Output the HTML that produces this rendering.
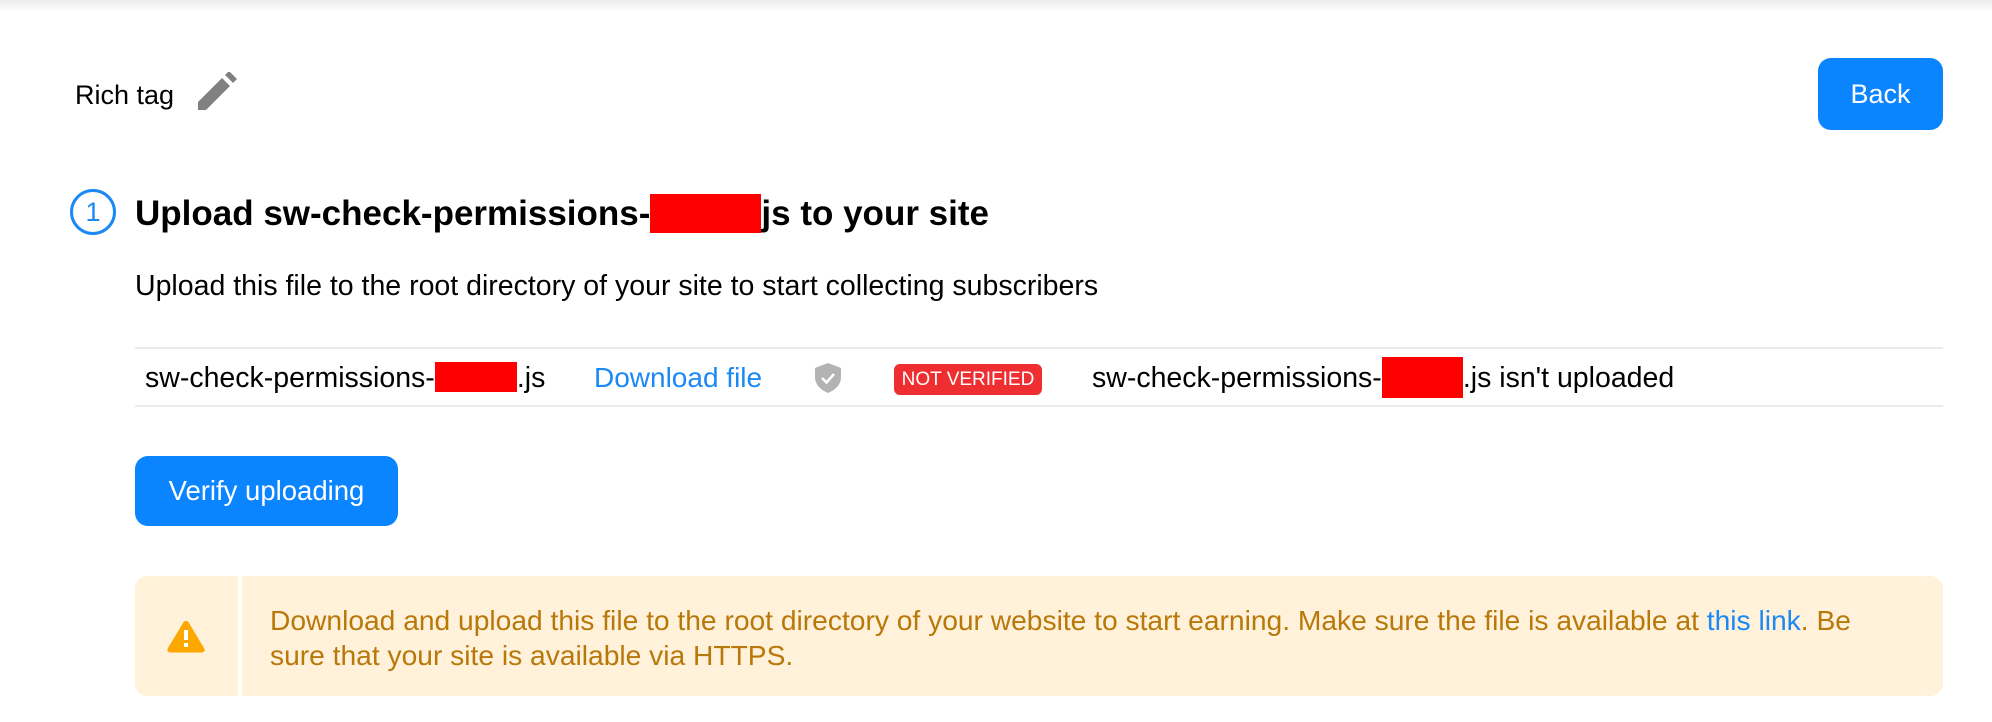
<!DOCTYPE html>
<html><head><meta charset="utf-8"><style>
*{margin:0;padding:0;box-sizing:border-box}
body{width:1992px;height:722px;background:#fff;font-family:"Liberation Sans",Arial,sans-serif;position:relative;overflow:hidden;color:#000}
.a{position:absolute;white-space:nowrap}
.r{display:inline-block;position:relative;height:1px;vertical-align:baseline}
.r i{position:absolute;left:0;right:0;background:#f00}
</style></head><body>
<div class="a" style="left:0;top:0;width:1992px;height:12px;background:linear-gradient(#ececec,#fff)"></div>
<div class="a" style="left:75px;top:80px;font-size:27px;line-height:30px">Rich tag</div>
<svg class="a" style="left:196px;top:72px" width="42" height="40" viewBox="0 0 42 40"><path d="M2 38 L2 30 L26 6 L34 14 L10 38 Z" fill="#808080"/><path d="M29 3 L33 -1 L41 7 L37 11 Z" fill="#808080"/></svg>
<div class="a" style="left:1818px;top:58px;width:125px;height:72px;background:#0a84ff;border-radius:13px;color:#fff;font-size:27px;line-height:72px;text-align:center">Back</div>
<div class="a" style="left:70px;top:189px;width:46px;height:46px;border:3px solid #1a88f5;border-radius:50%;color:#1a88f5;font-size:27px;line-height:40px;text-align:center">1</div>
<div class="a" style="left:135px;top:194px;font-size:35px;font-weight:bold;line-height:40px">Upload sw-check-permissions-<span class="r" style="width:111px"><i style="top:-30px;height:39px"></i></span>js to your site</div>
<div class="a" style="left:135px;top:270px;font-size:28.5px;line-height:32px">Upload this file to the root directory of your site to start collecting subscribers</div>
<div class="a" style="left:135px;top:347px;width:1808px;height:2px;background:#ebebeb"></div>
<div class="a" style="left:135px;top:405px;width:1808px;height:2px;background:#ebebeb"></div>
<div class="a" style="left:145px;top:362px;font-size:28.5px;line-height:32px">sw-check-permissions-<span class="r" style="width:82px"><i style="top:-24px;height:30px"></i></span>.js</div>
<div class="a" style="left:594px;top:362px;font-size:28px;line-height:32px;color:#1a88f5">Download file</div>
<svg class="a" style="left:815px;top:363px" width="26" height="30" viewBox="0 0 26 30"><path d="M13 0 L26 5 L26 14 C26 22 20 27 13 30 C6 27 0 22 0 14 L0 5 Z" fill="#b3b3b3"/><path d="M7 15 L11.5 19.5 L19 11" stroke="#fff" stroke-width="2.5" fill="none"/></svg>
<div class="a" style="left:894px;top:364px;width:148px;height:31px;background:#ee2e31;border-radius:6px;color:#fff;font-size:19px;line-height:31px;text-align:center">NOT VERIFIED</div>
<div class="a" style="left:1092px;top:362px;font-size:28.5px;line-height:32px">sw-check-permissions-<span class="r" style="width:81px"><i style="top:-29px;height:41px"></i></span>.js isn't uploaded</div>
<div class="a" style="left:135px;top:456px;width:263px;height:70px;background:#0a84ff;border-radius:13px;color:#fff;font-size:27.5px;line-height:70px;text-align:center">Verify uploading</div>
<div class="a" style="left:135px;top:576px;width:1808px;height:120px;background:#fff1da;border-radius:13px"></div>
<div class="a" style="left:238px;top:576px;width:4px;height:120px;background:#fff"></div>
<svg class="a" style="left:166px;top:619px" width="40" height="35" viewBox="0 0 40 35"><path d="M20 2 C21.5 2 22.5 3 23 4 L38 29 C39.5 31.5 38 33.5 35.5 33.5 L4.5 33.5 C2 33.5 0.5 31.5 2 29 L17 4 C17.5 3 18.5 2 20 2 Z" fill="#fca800"/><rect x="18" y="11" width="4" height="10" fill="#fff"/><rect x="18" y="24" width="4" height="4" fill="#fff"/></svg>
<div class="a" style="left:270px;top:603px;font-size:28.2px;line-height:35px;color:#b8780a">Download and upload this file to the root directory of your website to start earning. Make sure the file is available at <span style="color:#1a88f5">this link</span>. Be<br>sure that your site is available via HTTPS.</div>
</body></html>
